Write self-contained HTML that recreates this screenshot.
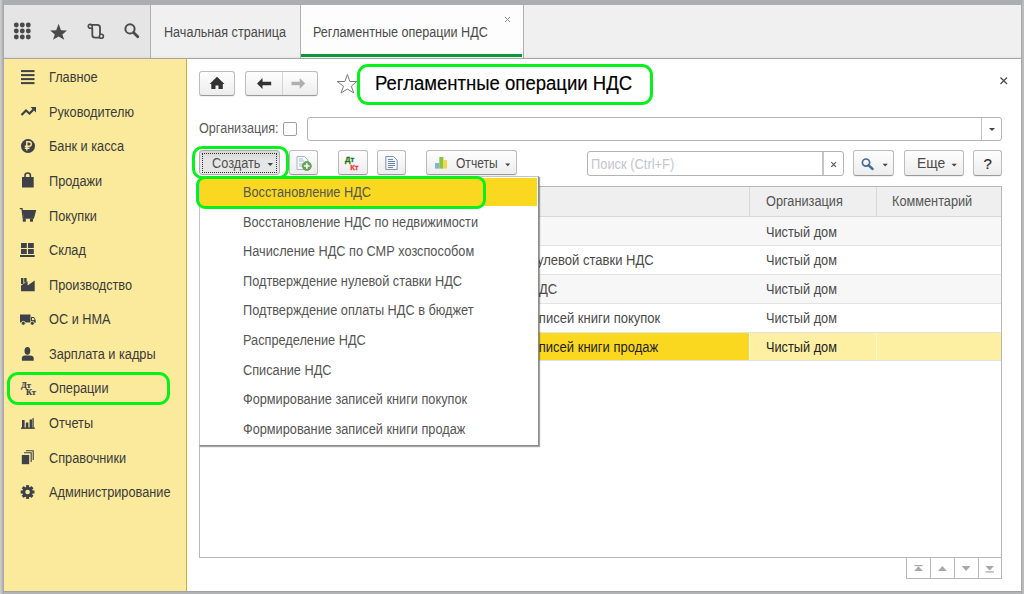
<!DOCTYPE html>
<html><head><meta charset="utf-8">
<style>
*{box-sizing:border-box;margin:0;padding:0}
html,body{width:1024px;height:594px;overflow:hidden;background:#abadaf;font-family:"Liberation Sans",sans-serif;position:relative}
.a{position:absolute}
.t{position:absolute;white-space:nowrap;line-height:1;}
.si{position:absolute;left:48.5px;font-size:14px;transform:scaleX(0.91);transform-origin:0 0;color:#3a3a3a;white-space:nowrap;line-height:1}
.ic{position:absolute;left:18px;width:20px;height:20px;overflow:visible}
.mi{position:absolute;left:243px;font-size:14px;transform:scaleX(0.91);transform-origin:0 0;color:#555;white-space:nowrap;line-height:1}
.btn{position:absolute;border:1px solid #bcbcbc;border-bottom-color:#9a9a9a;border-radius:3px;background:linear-gradient(#fefefe,#ededed);box-shadow:0 1px 0 rgba(0,0,0,0.06)}
.grn{position:absolute;border:3px solid #06f01c;}
</style></head><body>
<div class="a" style="left:0;top:0;width:4px;height:594px;background:linear-gradient(90deg,#d2d2d2 0,#c4c4c4 25%,#bdbdbd 50%,#a9a9a9 75%)"></div>
<div class="a" style="left:4px;top:5px;width:1017px;height:586px;background:#fff"></div>
<div class="a" style="left:1021px;top:0;width:3px;height:594px;background:linear-gradient(90deg,#a6a8aa 0,#a6a8aa 33%,#b7b9bb 34%,#babcbe)"></div>
<div class="a" style="left:4px;top:591px;width:1017px;height:3px;background:linear-gradient(#9fa1a3 0,#9fa1a3 33%,#b0b2b4 34%,#b4b6b8)"></div>

<!-- top left toolbar -->
<div class="a" style="left:4px;top:5px;width:146px;height:53px;background:#e5e5e5"></div>
<div class="a" style="left:150px;top:5px;width:1px;height:53px;background:#b0b0b0"></div>
<div class="a" style="left:151px;top:5px;width:870px;height:53px;background:#f0f0f0"></div>
<div class="a" style="left:300px;top:5px;width:1px;height:53px;background:#b0b0b0"></div>
<div class="a" style="left:301px;top:5px;width:222px;height:53px;background:#fdfdfd"></div>
<div class="a" style="left:301px;top:54px;width:221px;height:3px;background:#0a9a3a"></div>
<div class="a" style="left:523px;top:5px;width:1px;height:53px;background:#b0b0b0"></div>
<div class="a" style="left:4px;top:56px;width:1017px;height:2px;background:linear-gradient(rgba(0,0,0,0),rgba(0,0,0,0.05))"></div>
<div class="a" style="left:4px;top:58px;width:1017px;height:1px;background:#a6a6a6"></div>
<div class="t" style="left:164px;top:25px;font-size:14px;transform:scaleX(0.9);transform-origin:0 0;color:#4a4a4a">Начальная страница</div>
<div class="t" style="left:313px;top:25px;font-size:14px;transform:scaleX(0.9);transform-origin:0 0;color:#4a4a4a">Регламентные операции НДС</div>
<svg class="a" style="left:500px;top:12px" width="14" height="14" viewBox="0 0 14 14"><path d="M5 5L10 10M10 5L5 10" stroke="#888" stroke-width="1"/></svg>

<svg class="a" style="left:0;top:0" width="150" height="58" viewBox="0 0 150 58">
  <g fill="#4a4a4a">
    <circle cx="16.3" cy="25" r="2.45"/><circle cx="22.3" cy="25" r="2.45"/><circle cx="28.3" cy="25" r="2.45"/>
    <circle cx="16.3" cy="31" r="2.45"/><circle cx="22.3" cy="31" r="2.45"/><circle cx="28.3" cy="31" r="2.45"/>
    <circle cx="16.3" cy="37" r="2.45"/><circle cx="22.3" cy="37" r="2.45"/><circle cx="28.3" cy="37" r="2.45"/>
  </g>
  <path fill="#4a4a4a" d="M58.6 23.8 L61 30.2 L67 30.4 L62.4 34.4 L64.2 39.7 L58.6 36.4 L53 39.7 L54.8 34.4 L50.2 30.4 L56.2 30.2 Z"/>
  <g fill="none" stroke="#4a4a4a" stroke-width="1.8">
    <path d="M90.3 24.8 H97.3 Q100 24.8 100 27.5 V34.3 M92.3 27.8 V35 Q92.3 37.6 95 37.6 H100"/>
    <circle cx="90.3" cy="26.3" r="2" stroke-width="1.6"/>
    <circle cx="101.4" cy="36.2" r="2" stroke-width="1.6"/>
    <circle cx="130" cy="28.9" r="4.6" stroke-width="2"/>
  </g>
  <path d="M133.5 32.5 L137.8 36.8" stroke="#4a4a4a" stroke-width="2.8" stroke-linecap="round"/>
</svg>


<!-- content header -->
<div class="btn" style="left:199px;top:71px;width:36px;height:25px"></div>

<div class="btn" style="left:245px;top:71px;width:73px;height:25px"></div>
<div class="a" style="left:282px;top:72px;width:1px;height:23px;background:#d4d4d4"></div>
<svg class="a" style="left:0;top:0" width="1024" height="594" viewBox="0 0 1024 594">
 <path d="M217 76.8 L209.6 84 H211.3 V89.1 H215.5 V85.5 H218.5 V89.1 H222.8 V84 H224.5 Z" fill="#333"/>
 <path d="M257 83.5 L262.5 78 V81.8 H271.2 V85.2 H262.5 V89.1 Z" fill="#333"/>
 <path d="M305.2 83.5 L299.7 78 V81.8 H291.5 V85.2 H299.7 V89.1 Z" fill="#b0b0b0"/>
 <path d="M347.4 74.6 L349.9 81.5 H356.6 L351.3 86.3 L353.8 93 L347.4 89 L341 93 L343.5 86.3 L337.2 81.5 H344.9 Z" fill="none" stroke="#7a7a7a" stroke-width="1"/>
</svg>
<div class="t" style="left:375px;top:74px;font-size:19.5px;transform:scaleX(0.95);transform-origin:0 0;color:#000;-webkit-text-stroke:0.15px #000">Регламентные операции НДС</div>
<svg class="a" style="left:998px;top:75px" width="12" height="12" viewBox="0 0 12 12"><path d="M2.5 2.5L9 9M9 2.5L2.5 9" stroke="#4a4a4a" stroke-width="1.3"/></svg>

<!-- organization -->
<div class="t" style="left:198.5px;top:121px;font-size:14px;transform:scaleX(0.9);transform-origin:0 0;color:#5a5a5a">Организация:</div>
<div class="a" style="left:283px;top:122px;width:14px;height:14px;border:1px solid #a0a0a0;border-radius:2px;background:#fff"></div>
<div class="a" style="left:307px;top:117px;width:695px;height:24px;border:1px solid #b4b4b4;border-radius:3px;background:#fff"></div>
<div class="a" style="left:980.5px;top:118px;width:1.5px;height:22px;background:#c2c2c2"></div>
<svg class="a" style="left:987px;top:126px" width="10" height="8" viewBox="0 0 10 8"><path d="M2 2H8L5 5Z" fill="#444"/></svg>

<!-- command bar -->
<div class="a" style="left:199px;top:150px;width:81px;height:25px;border:1px solid #b0b0b0;border-radius:3px;background:linear-gradient(#d6d6d6,#e6e6e6 40%,#e6e6e6)"></div>
<div class="a" style="left:201.5px;top:153px;width:75.5px;height:19.5px;border:1px dotted #333"></div>
<div class="t" style="left:212px;top:156px;font-size:14px;transform:scaleX(0.91);transform-origin:0 0;color:#505050">Создать</div>
<svg class="a" style="left:265px;top:160px" width="10" height="8" viewBox="0 0 10 8"><path d="M2.5 3H8L5.25 6Z" fill="#444"/></svg>

<div class="btn" style="left:289px;top:150px;width:29px;height:25px"></div>
<div class="btn" style="left:338px;top:150px;width:30px;height:25px"></div>
<div class="btn" style="left:377px;top:150px;width:29px;height:25px"></div>
<div class="btn" style="left:426px;top:150px;width:91px;height:25px"></div>
<svg class="a" style="left:0;top:0" width="1024" height="594" viewBox="0 0 1024 594">
 <path d="M297 156.5 H304.5 L308 160 V169.5 H297 Z" fill="#f6f9fc" stroke="#a3b6ca" stroke-width="1"/>
 <path d="M299 159H303 M299 161H304 M299 164H303 M299 166H302" stroke="#9bb0c6" stroke-width="0.8"/>
 <circle cx="306.8" cy="166" r="4.5" fill="#68a656" stroke="#5c9a4a" stroke-width="0.8"/>
 <path d="M306.8 163.3V168.7M304.1 166H309.5" stroke="#fff" stroke-width="1.6"/>
 <text x="345" y="162.2" font-family="Liberation Sans" font-weight="bold" font-size="7.6" fill="#1c7410" stroke="#1c7410" stroke-width="0.3">Дт</text>
 <text x="350.2" y="169.8" font-family="Liberation Sans" font-weight="bold" font-size="7.6" fill="#f43838" stroke="#f43838" stroke-width="0.3">Кт</text>
 <path d="M385.8 156.5 H393.5 L397.2 160.2 V169.5 H385.8 Z" fill="#f2f5fa" stroke="#7f93ad" stroke-width="1"/>
 <path d="M388 159.5H393 M388 161.5H395 M388 163.5H395 M388 165.5H395 M388 167.5H393" stroke="#5d7799" stroke-width="0.9"/>
 <rect x="435" y="163" width="4.3" height="5.6" fill="#7fb3dc"/>
 <rect x="439.3" y="157" width="4.1" height="11.6" fill="#8cc43c"/>
 <rect x="443.4" y="160" width="3.6" height="8.6" fill="#f0d84a"/>
 <path d="M505.2 163.5H510.2L507.7 166.3Z" fill="#444"/>
</svg>
<div class="t" style="left:455.5px;top:156px;font-size:14px;transform:scaleX(0.86);transform-origin:0 0;color:#4a4a4a">Отчеты</div>

<!-- search -->
<div class="a" style="left:587px;top:151px;width:257px;height:25px;border:1px solid #b4b4b4;border-radius:3px;background:#fff"></div>
<div class="a" style="left:822.3px;top:152px;width:1.4px;height:23px;background:#c4c4c4"></div>
<div class="t" style="left:591px;top:157px;font-size:14px;transform:scaleX(0.92);transform-origin:0 0;color:#c3c6ce">Поиск (Ctrl+F)</div>
<svg class="a" style="left:828px;top:159px" width="10" height="10" viewBox="0 0 10 10"><path d="M3.3 3.2L8 7.8M8 3.2L3.3 7.8" stroke="#555" stroke-width="1.1"/></svg>
<div class="btn" style="left:853px;top:150px;width:41px;height:26px"></div>
<div class="btn" style="left:903.5px;top:150px;width:60px;height:26px"></div>
<div class="btn" style="left:973px;top:150px;width:29px;height:26px"></div>
<svg class="a" style="left:0;top:0" width="1024" height="594" viewBox="0 0 1024 594">
 <circle cx="866" cy="162.6" r="3.6" fill="none" stroke="#426c9a" stroke-width="1.7"/>
 <path d="M868.7 165.4 L872.6 169" stroke="#426c9a" stroke-width="2.4" stroke-linecap="round"/>
 <path d="M882.6 163.8H887.8L885.2 166.6Z" fill="#444"/>
 <path d="M951.5 163.8H956.9L954.2 166.6Z" fill="#444"/>
</svg>
<div class="t" style="left:916.5px;top:156px;font-size:14px;transform:scaleX(0.99);transform-origin:0 0;color:#4a4a4a">Еще</div>
<div class="t" style="left:983.5px;top:156px;font-size:15px;color:#2a2a2a;-webkit-text-stroke:0.2px #2a2a2a">?</div>

<!-- table -->
<div class="a" style="left:199px;top:186px;width:803px;height:372px;border:1px solid #b8b8b8;background:#fff"></div>
<div class="a" style="left:200px;top:187px;width:801px;height:29px;background:#efefef"></div>
<div class="a" style="left:200px;top:216px;width:801px;height:1px;background:#d8d8d8"></div>
<div class="a" style="left:749px;top:187px;width:1px;height:29px;background:#d8d8d8"></div>
<div class="a" style="left:876px;top:187px;width:1px;height:29px;background:#d8d8d8"></div>
<div class="t" style="left:766px;top:194px;font-size:14px;transform:scaleX(0.91);transform-origin:0 0;color:#555">Организация</div>
<div class="t" style="left:892px;top:194px;font-size:14px;transform:scaleX(0.91);transform-origin:0 0;color:#555">Комментарий</div>
<div class="a" style="left:200px;top:217px;width:801px;height:28px;background:#f7f7f7"></div>
<div class="a" style="left:200px;top:245px;width:801px;height:1px;background:#e2e2e2"></div>
<div class="t" style="left:766px;top:225px;font-size:14px;transform:scaleX(0.91);transform-origin:0 0;color:#4a4a4a">Чистый дом</div>
<div class="a" style="left:200px;top:246px;width:801px;height:28px;background:#fff"></div>
<div class="a" style="left:200px;top:274px;width:801px;height:1px;background:#e2e2e2"></div>
<div class="t" style="right:370.5px;top:253px;font-size:14px;transform:scaleX(0.93);transform-origin:100% 0;color:#4a4a4a">Подтверждение нулевой ставки НДС</div>
<div class="t" style="left:766px;top:253px;font-size:14px;transform:scaleX(0.91);transform-origin:0 0;color:#4a4a4a">Чистый дом</div>
<div class="a" style="left:200px;top:275px;width:801px;height:28px;background:#f7f7f7"></div>
<div class="a" style="left:200px;top:303px;width:801px;height:1px;background:#e2e2e2"></div>
<div class="t" style="right:466.5px;top:282px;font-size:14px;transform:scaleX(0.93);transform-origin:100% 0;color:#4a4a4a">Списание НДС</div>
<div class="t" style="left:766px;top:282px;font-size:14px;transform:scaleX(0.91);transform-origin:0 0;color:#4a4a4a">Чистый дом</div>
<div class="a" style="left:200px;top:304px;width:801px;height:28px;background:#fff"></div>
<div class="a" style="left:200px;top:332px;width:801px;height:1px;background:#e2e2e2"></div>
<div class="t" style="right:363.5px;top:311px;font-size:14px;transform:scaleX(0.93);transform-origin:100% 0;color:#4a4a4a">Формирование записей книги покупок</div>
<div class="t" style="left:766px;top:311px;font-size:14px;transform:scaleX(0.91);transform-origin:0 0;color:#4a4a4a">Чистый дом</div>
<div class="a" style="left:200px;top:333px;width:549px;height:27px;background:#fad81f"></div>
<div class="a" style="left:750px;top:333px;width:251px;height:27px;background:#fdf0a2"></div>
<div class="a" style="left:876px;top:333px;width:1px;height:27px;background:#fff6c8"></div>
<div class="a" style="left:200px;top:360px;width:801px;height:1px;background:#e2e2e2"></div>
<div class="t" style="right:365.5px;top:340px;font-size:14px;transform:scaleX(0.93);transform-origin:100% 0;color:#1e1e1e">Формирование записей книги продаж</div>
<div class="t" style="left:766px;top:340px;font-size:14px;transform:scaleX(0.91);transform-origin:0 0;color:#1e1e1e">Чистый дом</div>
<div class="a" style="left:906px;top:557px;width:96px;height:22px;border:1px solid #b8b8b8;background:#fff"></div>
<div class="a" style="left:930px;top:558px;width:1px;height:20px;background:#b8b8b8"></div>
<div class="a" style="left:954px;top:558px;width:1px;height:20px;background:#b8b8b8"></div>
<div class="a" style="left:978px;top:558px;width:1px;height:20px;background:#b8b8b8"></div>
<svg class="a" style="left:0;top:0" width="1024" height="594" viewBox="0 0 1024 594">
 <g fill="#a8a8a8">
 <rect x="914.5" y="565" width="8" height="1.2"/><path d="M918.5 566.3L922.8 571H914.2Z"/>
 <path d="M942.4 566L946.8 571H938Z"/>
 <path d="M966.1 571L970.5 566H961.7Z"/>
 <path d="M989.7 570.5L994 566H985.4Z"/><rect x="985.5" y="571.3" width="8.5" height="1.2"/>
 </g>
</svg>

<!-- dropdown menu -->
<div class="a" style="left:199px;top:176px;width:340px;height:270px;border:1px solid #c4c4c4;border-right-color:#8c8c8c;border-bottom-color:#8c8c8c;background:#fff;box-shadow:1px 1px 1px rgba(0,0,0,0.35)"></div>
<div class="a" style="left:200px;top:178px;width:337px;height:28px;background:#fad81f"></div>
<div class="mi" style="top:185.0px">Восстановление НДС</div>
<div class="mi" style="top:215.0px">Восстановление НДС по недвижимости</div>
<div class="mi" style="top:244.0px">Начисление НДС по СМР хозспособом</div>
<div class="mi" style="top:274.0px">Подтверждение нулевой ставки НДС</div>
<div class="mi" style="top:303.0px">Подтверждение оплаты НДС в бюджет</div>
<div class="mi" style="top:333.0px">Распределение НДС</div>
<div class="mi" style="top:363.0px">Списание НДС</div>
<div class="mi" style="top:392.0px">Формирование записей книги покупок</div>
<div class="mi" style="top:422.0px">Формирование записей книги продаж</div>

<div class="grn" style="left:196px;top:175.5px;width:290px;height:33.5px;border-radius:9px;border-width:3.5px"></div>
<div class="grn" style="left:192px;top:145.5px;width:96.5px;height:33px;border-radius:10px;border-width:3.5px"></div>
<div class="grn" style="left:356.5px;top:64px;width:296.5px;height:41px;border-radius:11px;border-width:3.5px"></div>

<!-- sidebar -->
<div class="a" style="left:4px;top:59px;width:182px;height:532px;background:#fcea9c"></div>
<div class="a" style="left:186px;top:59px;width:1px;height:532px;background:#c9b23a"></div>
<div class="si" style="top:70.0px">Главное</div>
<div class="si" style="top:105.0px">Руководителю</div>
<div class="si" style="top:139.0px">Банк и касса</div>
<div class="si" style="top:174.0px">Продажи</div>
<div class="si" style="top:209.0px">Покупки</div>
<div class="si" style="top:243.0px">Склад</div>
<div class="si" style="top:278.0px">Производство</div>
<div class="si" style="top:312.0px">ОС и НМА</div>
<div class="si" style="top:347.0px">Зарплата и кадры</div>
<div class="si" style="top:381.0px">Операции</div>
<div class="si" style="top:416.0px">Отчеты</div>
<div class="si" style="top:451.0px">Справочники</div>
<div class="si" style="top:485.0px">Администрирование</div>
<svg class="a" style="left:0;top:0" width="187" height="594" viewBox="0 0 187 594">
<g fill="#3e4148">
 <rect x="21" y="70.1" width="13.5" height="2"/><rect x="21" y="74.1" width="13.5" height="2"/><rect x="21" y="78.1" width="13.5" height="2"/><rect x="21" y="82.1" width="13.5" height="2"/>
</g>
<path d="M21.5 115 L26 110.5 L29.5 113.5 L34 109" fill="none" stroke="#3e4148" stroke-width="2.2" stroke-linejoin="miter"/>
<path d="M30.5 107 H36 V112.5 Z" fill="#3e4148"/>
<circle cx="28" cy="146.1" r="7" fill="#3e4148"/>
<path d="M26.8 150.5 V141.8 H29 Q31.3 141.8 31.3 144 Q31.3 146.3 29 146.3 H24.8 M24.8 148.3 H29.5" fill="none" stroke="#fcea9c" stroke-width="1.4"/>
<rect x="22" y="177" width="11.7" height="10.5" fill="#3e4148"/>
<path d="M25 178 V175.5 Q25 173 27.7 173 Q30.4 173 30.4 175.5 V178" fill="none" stroke="#3e4148" stroke-width="1.6"/>
<path d="M19.8 208.6 H22 L23.2 218 H33.4 L35.4 210.6 H22.2" fill="none" stroke="#3e4148" stroke-width="1.3"/>
<path d="M22.6 210.6 H35.4 L33.4 218 H23.6 Z" fill="#3e4148"/>
<rect x="22.8" y="218.5" width="3" height="3.2" fill="#3e4148"/><rect x="30" y="218.5" width="3" height="3.2" fill="#3e4148"/>
<rect x="21" y="243" width="5.8" height="5" fill="#3e4148"/><rect x="28" y="243" width="5.8" height="5" fill="#3e4148"/>
<rect x="21" y="249" width="5.8" height="5" fill="#3e4148"/><rect x="28" y="249" width="5.8" height="5" fill="#3e4148"/>
<rect x="20" y="255" width="14.7" height="2" fill="#3e4148"/>
<rect x="21" y="278" width="2.4" height="6" fill="#3e4148"/><rect x="24.2" y="278" width="2.4" height="4.6" fill="#3e4148"/>
<path d="M21 285.5 L27.6 281.3 V285.5 L34.7 280.5 V291.2 H21 Z" fill="#3e4148"/>
<rect x="20" y="314.5" width="10.5" height="8" fill="#3e4148"/>
<path d="M31 317 H34 L35.7 320 V322.8 H31 Z" fill="#3e4148"/>
<path d="M32 318 H33.6 L34.6 320 H32 Z" fill="#fcea9c"/>
<circle cx="23.3" cy="323.3" r="2" fill="#3e4148" stroke="#fcea9c" stroke-width="0.8"/><circle cx="32.3" cy="323.3" r="2" fill="#3e4148" stroke="#fcea9c" stroke-width="0.8"/>
<ellipse cx="27.4" cy="350.8" rx="2.9" ry="3.9" fill="#3e4148"/>
<path d="M21.9 360.7 V358.3 Q21.9 355.6 25 355.6 H29.8 Q33.7 355.6 33.7 358.3 V360.7 Z" fill="#3e4148"/>
<g fill="#3e4148">
<rect x="21" y="427.5" width="13.8" height="1.4"/>
<rect x="22" y="420" width="2.6" height="8"/><rect x="25.8" y="422.5" width="2.6" height="5.5"/><rect x="29.6" y="419.5" width="2.6" height="8.5"/>
<rect x="32.5" y="418" width="1.2" height="10"/>
</g>
<g>
<path d="M26 450.8 H33.2 V460" fill="none" stroke="#3e4148" stroke-width="1.1"/>
<path d="M24 452.8 H31.2 V462" fill="none" stroke="#3e4148" stroke-width="1.1"/>
<rect x="21.8" y="455" width="7.4" height="9.2" fill="#3e4148"/>
</g>
<g transform="translate(27.6 492)">
<circle r="5.2" fill="#3e4148"/>
<g fill="#3e4148">
<rect x="-1.5" y="-6.9" width="3" height="13.8"/>
<rect x="-1.5" y="-6.9" width="3" height="13.8" transform="rotate(45)"/>
<rect x="-1.5" y="-6.9" width="3" height="13.8" transform="rotate(90)"/>
<rect x="-1.5" y="-6.9" width="3" height="13.8" transform="rotate(135)"/>
</g>
<circle r="2.3" fill="#fcea9c"/>
</g>
<text x="21" y="387.8" font-family="Liberation Serif" font-weight="bold" font-size="8.4" fill="#3e4148" stroke="#3e4148" stroke-width="0.2">Дт</text>
<text x="26" y="395" font-family="Liberation Serif" font-weight="bold" font-size="8.4" fill="#3e4148" stroke="#3e4148" stroke-width="0.2">Кт</text>
</svg>
<div class="grn" style="left:7px;top:372px;width:163px;height:33px;border-radius:11px"></div>
</body></html>
